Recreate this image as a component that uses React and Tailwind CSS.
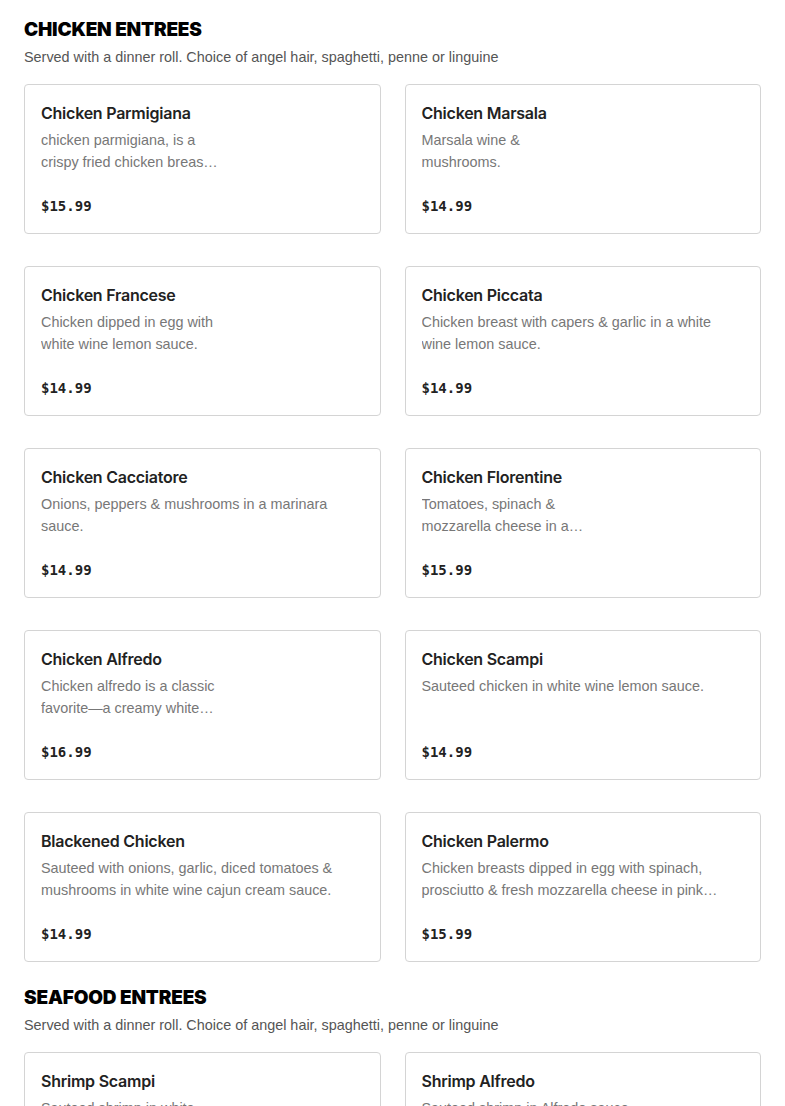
import React from "react";

const chicken = [
  { name: "Chicken Parmigiana", desc: "chicken parmigiana, is a crispy fried chicken breast topped with marinara sauce and melted mozzarella.", price: "$15.99", narrow: true },
  { name: "Chicken Marsala", desc: "Marsala wine & mushrooms.", price: "$14.99", narrow: true },
  { name: "Chicken Francese", desc: "Chicken dipped in egg with white wine lemon sauce.", price: "$14.99", narrow: true },
  { name: "Chicken Piccata", desc: "Chicken breast with capers & garlic in a white wine lemon sauce.", price: "$14.99" },
  { name: "Chicken Cacciatore", desc: "Onions, peppers & mushrooms in a marinara sauce.", price: "$14.99" },
  { name: "Chicken Florentine", desc: "Tomatoes, spinach & mozzarella cheese in a white wine sauce.", price: "$15.99", narrow: true },
  { name: "Chicken Alfredo", desc: "Chicken alfredo is a classic favorite\u2014a creamy white sauce with parmesan cheese.", price: "$16.99", narrow: true },
  { name: "Chicken Scampi", desc: "Sauteed chicken in white wine lemon sauce.", price: "$14.99" },
  { name: "Blackened Chicken", desc: "Sauteed with onions, garlic, diced tomatoes & mushrooms in white wine cajun cream sauce.", price: "$14.99" },
  { name: "Chicken Palermo", desc: "Chicken breasts dipped in egg with spinach, prosciutto & fresh mozzarella cheese in pink vodka sauce.", price: "$15.99" },
];

const seafood = [
  { name: "Shrimp Scampi", desc: "Sauteed shrimp in white wine lemon sauce.", price: "$16.99", narrow: true },
  { name: "Shrimp Alfredo", desc: "Sauteed shrimp in Alfredo sauce.", price: "$16.99" },
];

const Card = ({ item }) => (
  <div className="h-[150px] flex flex-col border border-[#d4d4d4] rounded-[4px] bg-white px-4 pt-4 pb-[17px]">
    <h3 className="text-[16px] leading-6 font-semibold tracking-[-0.015em] text-[#222] font-['Inter',sans-serif]">
      {item.name}
    </h3>
    <p
      className={
        "mt-1 text-[14.4px] leading-[22px] text-[#777] line-clamp-2 " +
        (item.narrow ? "w-[178px]" : "w-full pr-1")
      }
    >
      {item.desc}
    </p>
    <p className="mt-auto text-[14px] leading-5 font-bold text-[#222] font-['DejaVu_Sans_Mono',monospace]">
      {item.price}
    </p>
  </div>
);

const Section = ({ title, items }) => (
  <section>
    <h2 className="text-[19px] leading-7 font-black uppercase text-black tracking-[-0.01em] font-['Inter',sans-serif]">
      {title}
    </h2>
    <p className="mt-[3px] text-[14.4px] leading-5 text-[#555]">
      Served with a dinner roll. Choice of angel hair, spaghetti, penne or linguine
    </p>
    <div className="mt-[17px] grid grid-cols-2 gap-x-6 gap-y-8">
      {items.map((item) => (
        <Card key={item.name} item={item} />
      ))}
    </div>
  </section>
);

export default function App() {
  return (
    <div className="min-h-screen bg-white px-6 pt-4 font-['Liberation_Sans',Arial,sans-serif] flex flex-col gap-[22px]">
      <Section title="Chicken Entrees" items={chicken} />
      <Section title="Seafood Entrees" items={seafood} />
    </div>
  );
}
